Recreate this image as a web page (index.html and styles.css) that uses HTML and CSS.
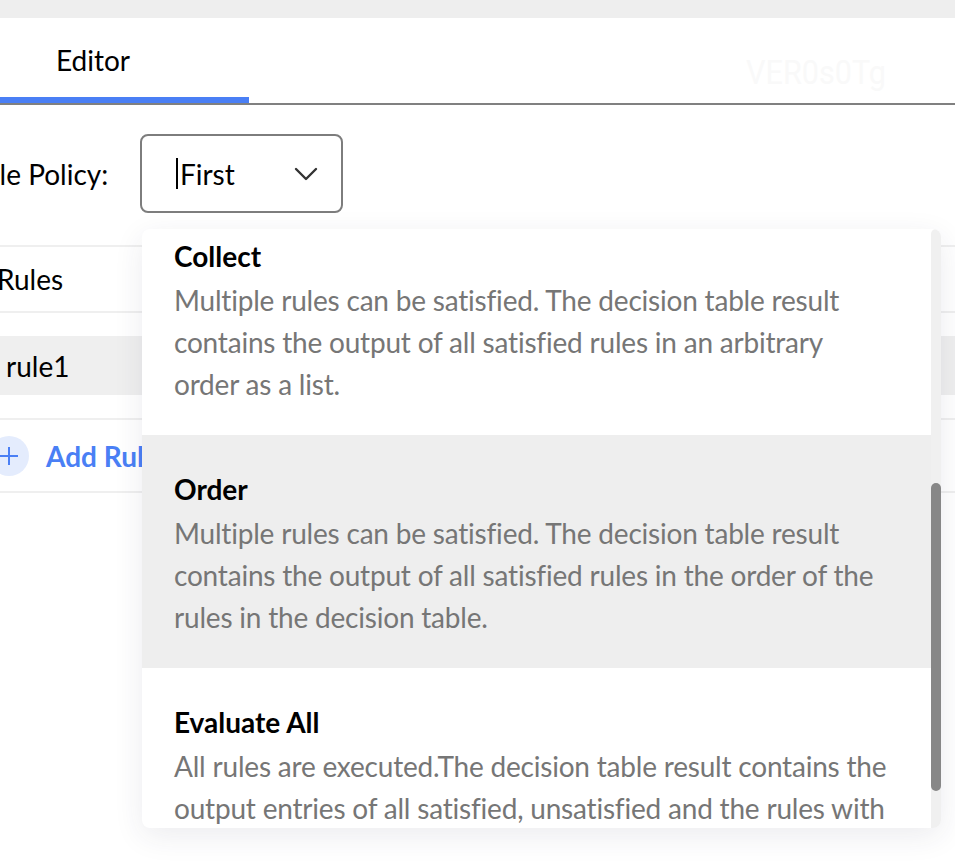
FILE: index.html
```html
<!DOCTYPE html>
<html lang="en">
<head>
<meta charset="utf-8">
<title>Editor</title>
<link rel="stylesheet" href="styles.css">
</head>
<body>
<div class="topbar"></div>
<div class="page">
  <div class="tabs">
    <div class="tab active">Editor</div>
  </div>
  <div class="watermark">VER0s0Tg</div>

  <div class="policy-row">
    <div class="policy-label">Rule Policy:</div>
    <div class="select">
      <span class="caret"></span>
      <span class="select-value">First</span>
      <svg class="chevron" width="24" height="14" viewBox="0 0 24 14"><polyline points="2,2 12,12 22,2" fill="none" stroke="#333" stroke-width="2.4" stroke-linecap="round" stroke-linejoin="round"/></svg>
    </div>
  </div>

  <div class="rules">
    <div class="rules-head">Rules</div>
    <div class="rule-spacer"></div>
    <div class="rule-row"><span class="rule-name">rule1</span></div>
    <div class="rule-spacer"></div>
    <div class="add-row">
      <span class="add-icon"><svg width="20" height="20" viewBox="0 0 20 20"><path d="M10 1v18M1 10h18" stroke="#4a7ff5" stroke-width="2" fill="none"/></svg></span>
      <span class="add-text">Add Rule</span>
    </div>
  </div>

  <div class="dropdown">
    <div class="options">
      <div class="option scrolled">
        <div class="opt-title">Collect</div>
        <div class="opt-desc">Multiple rules can be satisfied. The decision table result contains the output of all satisfied rules in an arbitrary order as a list.</div>
      </div>
      <div class="option selected">
        <div class="opt-title">Order</div>
        <div class="opt-desc">Multiple rules can be satisfied. The decision table result contains the output of all satisfied rules in the order of the rules in the decision table.</div>
      </div>
      <div class="option">
        <div class="opt-title">Evaluate All</div>
        <div class="opt-desc">All rules are executed.The decision table result contains the output entries of all satisfied, unsatisfied and the rules with errors.</div>
      </div>
    </div>
    <div class="track"><div class="thumb"></div></div>
  </div>
</div>
</body>
</html>
```

FILE: styles.css
```css
html, body {
  margin: 0;
  padding: 0;
  background: #ffffff;
  overflow: hidden;
  width: 955px;
  height: 862px;
}
body {
  font-family: "Lato", "Noto Sans", sans-serif;
  font-variant-ligatures: none;
  color: #000;
}
.topbar {
  height: 18px;
  background: #eeeeee;
}
.page {
  position: relative;
}
.tabs {
  display: flex;
  height: 87px;
  border-bottom: 2px solid #808080;
  box-sizing: border-box;
}
.tab {
  width: 249px;
  box-sizing: border-box;
  padding-left: 56px;
  padding-top: 24px;
  font-size: 28px;
  line-height: 36px;
}
.tab.active {
  border-bottom: 6px solid #4a7ff5;
}
.watermark {
  position: absolute;
  left: 746px;
  top: 34px;
  font-family: Roboto, sans-serif;
  font-size: 34px;
  color: #f9f9f9;
  transform: scaleX(0.9);
  transform-origin: left;
}
.policy-row {
  display: flex;
  align-items: center;
  margin-top: 29px;
}
.policy-label {
  margin-left: -33px;
  width: 173px;
  flex-shrink: 0;
  font-size: 28px;
  white-space: nowrap;
}
.select {
  width: 203px;
  height: 79px;
  box-sizing: border-box;
  border: 2px solid #7d7d7d;
  border-radius: 8px;
  display: flex;
  align-items: center;
  padding-left: 34px;
  padding-right: 23px;
}
.caret {
  width: 2px;
  height: 31px;
  background: #000;
  margin-right: 2px;
}
.select-value {
  font-size: 28px;
  flex: 1;
}
.chevron {
  display: block;
}
.rules {
  margin-top: 32px;
  border-top: 2px solid #efefef;
}
.rules-head {
  height: 64px;
  display: flex;
  align-items: center;
  margin-left: -3px;
  font-size: 28px;
  border-bottom: 2px solid #efefef;
}
.rule-spacer {
  height: 23px;
}
.rule-row {
  height: 59px;
  background: #efefef;
  display: flex;
  align-items: center;
  font-size: 28px;
}
.rule-name {
  margin-left: 6px;
}
.add-row {
  border-top: 2px solid #efefef;
  border-bottom: 2px solid #efefef;
  height: 71px;
  display: flex;
  align-items: center;
}
.add-icon {
  width: 40px;
  height: 40px;
  border-radius: 50%;
  background: #e4ecfd;
  margin-left: -11px;
  display: flex;
  align-items: center;
  justify-content: center;
}
.add-text {
  margin-left: 17px;
  font-size: 28px;
  font-weight: 700;
  color: #4a7ff5;
}
.dropdown {
  position: absolute;
  left: 142px;
  top: 211px;
  width: 799px;
  height: 599px;
  background: #ffffff;
  border-radius: 8px;
  box-shadow: 0 8px 30px rgba(40, 40, 80, 0.09);
  overflow: hidden;
  display: flex;
}
.options {
  flex: 1;
  overflow: hidden;
}
.option {
  height: 233px;
  box-sizing: border-box;
  padding: 40px 41px 0 32px;
}
.option.scrolled {
  margin-top: -27px;
}
.option.selected {
  background: #eeeeee;
}
.opt-title {
  font-size: 28px;
  font-weight: 700;
  line-height: 28px;
}
.opt-desc {
  margin-top: 9px;
  font-size: 28px;
  letter-spacing: -0.2px;
  line-height: 42px;
  color: #767676;
}
.track {
  width: 10px;
  background: #f0f0f0;
  border-radius: 5px 5px 0 0;
}
.thumb {
  margin-top: 254px;
  height: 308px;
  background: #878787;
  border-radius: 5px;
}
```
